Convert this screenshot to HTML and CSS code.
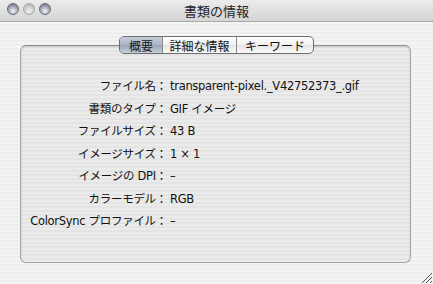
FILE: index.html
```html
<!DOCTYPE html>
<html lang="ja">
<head>
  <meta charset="UTF-8">
  <title>書類の情報</title>
  <link rel="stylesheet" href="styles.css">
</head>
<body>
  <div class="window">
    <div class="titlebar">
      <div class="lights">
        <span class="light"></span>
        <span class="light off"></span>
        <span class="light"></span>
      </div>
      <div class="title">書類の情報</div>
    </div>

    <div class="content">
      <div class="panel">
        <div class="tabs">
          <span class="tab selected">概要</span>
          <span class="tab">詳細な情報</span>
          <span class="tab">キーワード</span>
        </div>
        <div class="info">
          <div class="label">ファイル名：</div><div class="value">transparent-pixel._V42752373_.gif</div>
          <div class="label">書類のタイプ：</div><div class="value">GIF イメージ</div>
          <div class="label">ファイルサイズ：</div><div class="value">43 B</div>
          <div class="label">イメージサイズ：</div><div class="value">1 × 1</div>
          <div class="label">イメージの DPI：</div><div class="value">–</div>
          <div class="label">カラーモデル：</div><div class="value">RGB</div>
          <div class="label">ColorSync プロファイル：</div><div class="value">–</div>
        </div>
      </div>
    </div>

    <svg class="grip" width="14" height="14" viewBox="0 0 14 14">
      <path d="M13 3 L3 13 M13 7 L7 13 M13 11 L11 13" stroke="#555" stroke-width="1" fill="none"/>
      <path d="M14 4 L4 14 M14 8 L8 14" stroke="#fff" stroke-width="1" fill="none"/>
    </svg>
  </div>
</body>
</html>
```

FILE: styles.css
```css
* { box-sizing: border-box; }
html, body { margin: 0; padding: 0; }
body {
  font-family: "DejaVu Sans", "Noto Sans CJK JP", sans-serif;
  font-size: 12px;
  color: #111;
}
.window {
  position: relative;
  width: 433px;
  height: 284px;
  overflow: hidden;
  background: repeating-linear-gradient(#eeeeee 0, #eeeeee 2px, #f4f4f4 2px, #f4f4f4 4px);
}
.titlebar {
  position: relative;
  height: 22px;
  display: flex;
  align-items: center;
  justify-content: center;
  background: linear-gradient(#ececec, #d4d4d4);
  border-bottom: 1px solid #a8a8a8;
}
.lights {
  position: absolute;
  left: 7px;
  top: 3px;
  display: flex;
  gap: 4px;
}
.light {
  width: 12px;
  height: 12px;
  border-radius: 50%;
  border: 1px solid #6b6f78;
  background: radial-gradient(circle at 50% 70%, #f2f4f8 0, #aeb4c0 45%, #5a6070 100%);
}
.light.off {
  border-color: #a8a8a8;
  background: radial-gradient(circle at 50% 70%, #f4f4f4 0, #cfcfcf 50%, #a8a8a8 100%);
}
.title {
  font-size: 13px;
  color: #222;
}
.content {
  padding: 23px 22px 21px 20px;
}
.panel {
  position: relative;
  height: 218px;
  border: 1px solid #a4a4a4;
  border-top-color: #8c8c8c;
  border-radius: 6px;
  background: repeating-linear-gradient(#e4e4e4 0, #e4e4e4 2px, #ebebeb 2px, #ebebeb 4px);
  box-shadow: inset 0 1px 2px rgba(0, 0, 0, 0.12);
}
.tabs {
  position: absolute;
  left: 98px;
  top: -10px;
  display: flex;
  height: 18px;
  border: 1px solid #6e6e6e;
  border-radius: 5px;
  overflow: hidden;
  background: linear-gradient(#ffffff, #f0f0f0 50%, #e4e4e4 51%, #fafafa);
}
.tab {
  display: flex;
  align-items: center;
  justify-content: center;
  white-space: nowrap;
  font-size: 12px;
  border-left: 1px solid #8a8a8a;
}
.tab:first-child { border-left: none; width: 42px; }
.tab:nth-child(2) { width: 74px; }
.tab:nth-child(3) { width: 77px; }
.tab.selected {
  background: linear-gradient(#c4ccd8, #a9b4c4 50%, #97a4b6 51%, #c6d0dc);
  color: #1a1a1a;
}
.info {
  display: grid;
  grid-template-columns: 146px auto;
  column-gap: 3px;
  padding-top: 29px;
  font-size: 11.5px;
  line-height: 22.5px;
  letter-spacing: -0.3px;
}
.label {
  display: flex;
  justify-content: flex-end;
  white-space: nowrap;
}
.value {
  white-space: nowrap;
}
.grip {
  position: absolute;
  right: 0;
  bottom: 0;
}
```
